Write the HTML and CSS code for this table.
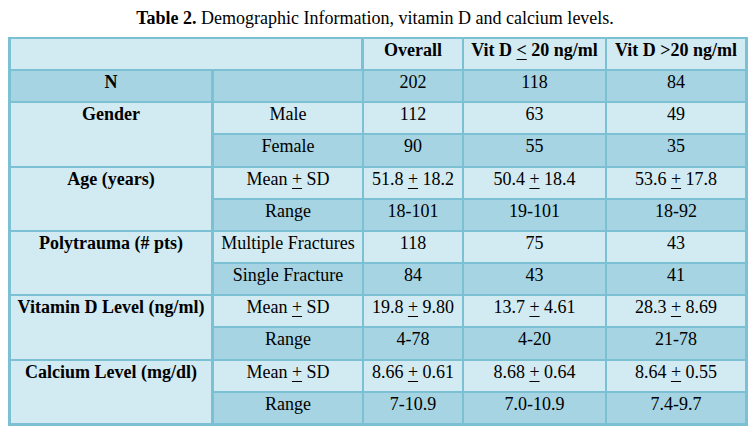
FILE: index.html
```html
<!DOCTYPE html>
<html>
<head>
<meta charset="utf-8">
<link rel="stylesheet" href="styles.css">
</head>
<body>
<p class="caption"><b>Table 2.</b> Demographic Information, vitamin D and calcium levels.</p>
<table class="data">
  <colgroup>
    <col class="c1"><col class="c2"><col class="c3"><col class="c4"><col class="c5">
  </colgroup>
  <tr class="light head">
    <td colspan="2" class="sep"></td>
    <td>Overall</td>
    <td>Vit D <u>&lt;</u> 20 ng/ml</td>
    <td class="last">Vit D &gt;20 ng/ml</td>
  </tr>
  <tr class="dark">
    <td class="lbl">N</td>
    <td></td>
    <td>202</td>
    <td>118</td>
    <td class="last">84</td>
  </tr>
  <tr class="light">
    <td class="lbl" rowspan="2">Gender</td>
    <td>Male</td>
    <td>112</td>
    <td>63</td>
    <td class="last">49</td>
  </tr>
  <tr class="dark">
    <td>Female</td>
    <td>90</td>
    <td>55</td>
    <td class="last">35</td>
  </tr>
  <tr class="light">
    <td class="lbl" rowspan="2">Age (years)</td>
    <td>Mean <u>+</u> SD</td>
    <td>51.8 <u>+</u> 18.2</td>
    <td>50.4 <u>+</u> 18.4</td>
    <td class="last">53.6 <u>+</u> 17.8</td>
  </tr>
  <tr class="dark">
    <td>Range</td>
    <td>18-101</td>
    <td>19-101</td>
    <td class="last">18-92</td>
  </tr>
  <tr class="light">
    <td class="lbl" rowspan="2">Polytrauma (# pts)</td>
    <td>Multiple Fractures</td>
    <td>118</td>
    <td>75</td>
    <td class="last">43</td>
  </tr>
  <tr class="dark">
    <td>Single Fracture</td>
    <td>84</td>
    <td>43</td>
    <td class="last">41</td>
  </tr>
  <tr class="light">
    <td class="lbl" rowspan="2">Vitamin D Level (ng/ml)</td>
    <td>Mean <u>+</u> SD</td>
    <td>19.8 <u>+</u> 9.80</td>
    <td>13.7 <u>+</u> 4.61</td>
    <td class="last">28.3 <u>+</u> 8.69</td>
  </tr>
  <tr class="dark">
    <td>Range</td>
    <td>4-78</td>
    <td>4-20</td>
    <td class="last">21-78</td>
  </tr>
  <tr class="light">
    <td class="lbl bottom" rowspan="2">Calcium Level (mg/dl)</td>
    <td>Mean <u>+</u> SD</td>
    <td>8.66 <u>+</u> 0.61</td>
    <td>8.68 <u>+</u> 0.64</td>
    <td class="last">8.64 <u>+</u> 0.55</td>
  </tr>
  <tr class="dark lastrow">
    <td>Range</td>
    <td>7-10.9</td>
    <td>7.0-10.9</td>
    <td class="last">7.4-9.7</td>
  </tr>
</table>
</body>
</html>
```

FILE: styles.css
```css
body {
  margin: 8px;
  background: #ffffff;
  color: #000000;
  font-family: "Liberation Serif", "Times New Roman", serif;
}
.caption {
  margin: 0 0 9px 0;
  padding-right: 6px;
  font-family: "Liberation Serif", "Times New Roman", serif;
  font-size: 18px;
  line-height: 20px;
  text-align: center;
}
.data {
  width: 740px;
  table-layout: fixed;
  border-collapse: separate;
  border-spacing: 0;
  border: 3px solid #7bc0d3;
  border-top-width: 2px;
}
.c1 { width: 203px; }
.c2 { width: 150px; }
.c3 { width: 100px; }
.c4 { width: 143px; }
.c5 { width: 138px; }
.data td {
  font-family: "Liberation Serif", "Times New Roman", serif;
  font-size: 18px;
  padding: 1px 2px 9.17px 2px;
  line-height: 20px;
  text-align: center;
  vertical-align: top;
  border-right: 2px solid #7bc0d3;
  border-bottom: 2px solid #7bc0d3;
  white-space: nowrap;
}
.data td.last { border-right: none; }
.data tr.lastrow td, .data td.bottom { border-bottom: none; }
.data td.lbl, .data td.sep { border-right-width: 3px; }
.data td.lbl { font-weight: bold; }
.head td { font-weight: bold; }
.light td { background: #d2eaf2; }
.dark td { background: #a6d4e2; }
u {
  text-decoration: underline;
  text-underline-offset: 3px;
  text-decoration-thickness: 1px;
}
```
